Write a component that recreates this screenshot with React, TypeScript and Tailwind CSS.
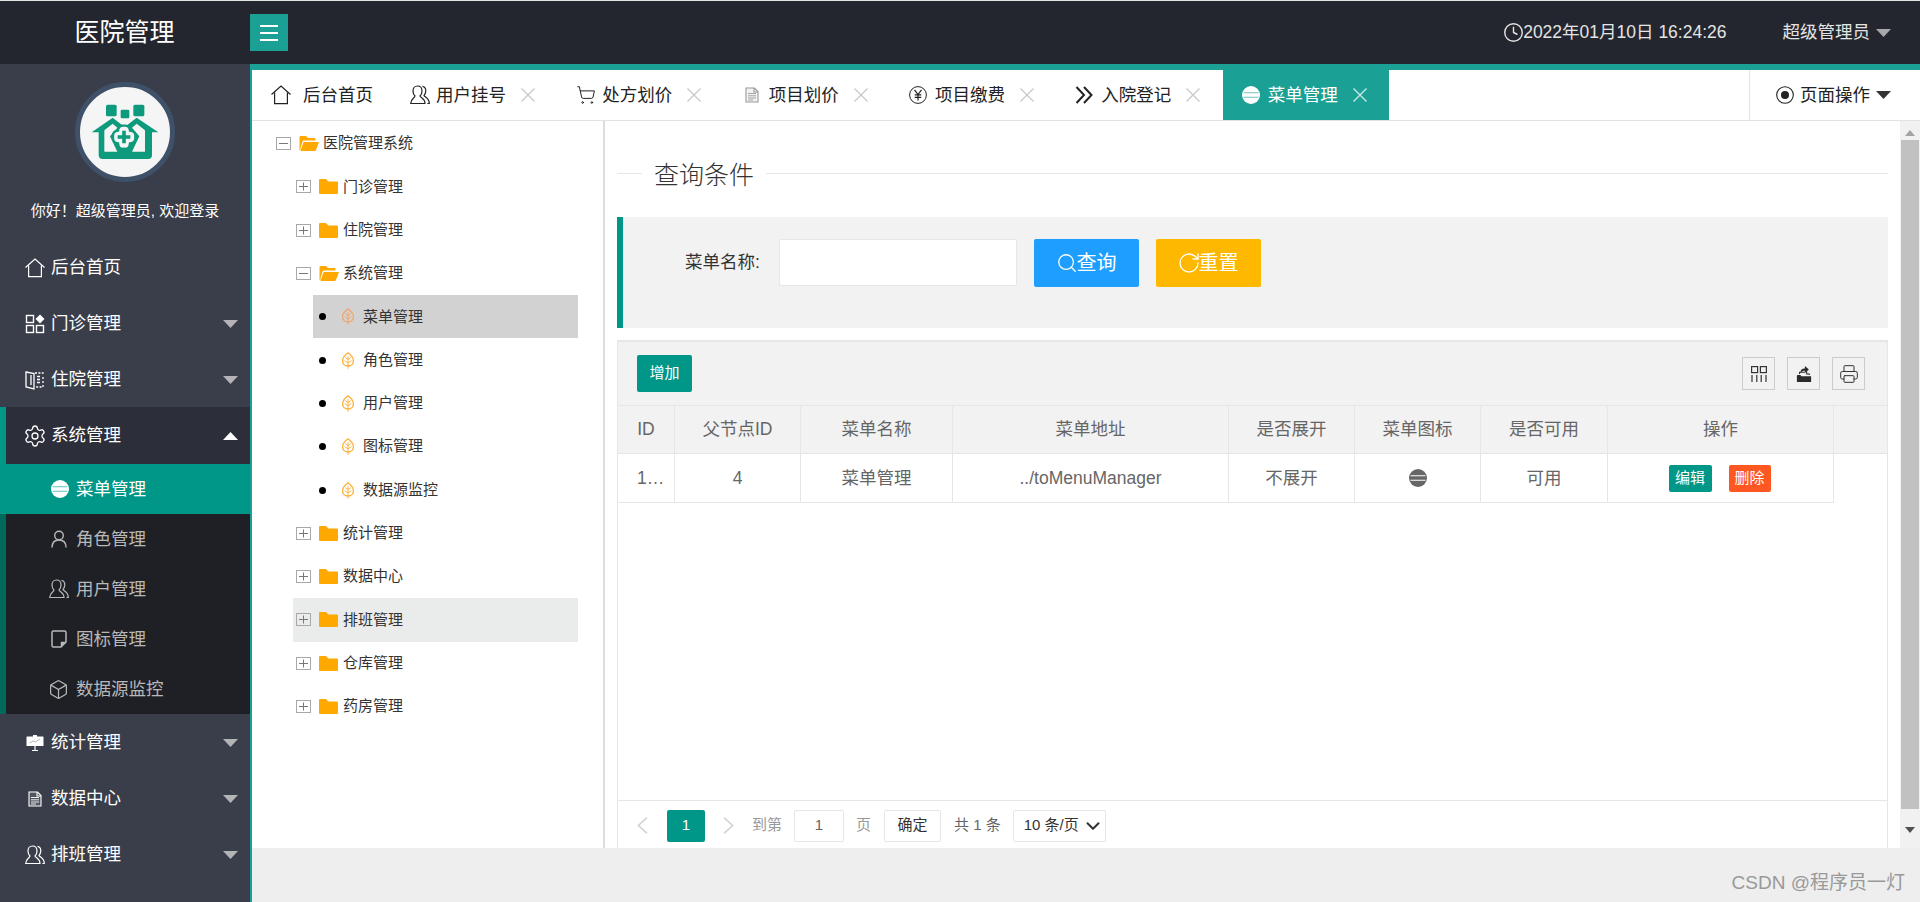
import React from "react";
import { Settings, Box, ShoppingCart, Printer, Search, RotateCw, Clock, ChevronDown } from "lucide-react";

type IP = { className?: string };

const Home = ({ className }: IP) => (
  <svg viewBox="0 0 20 20" className={className} fill="none" stroke="currentColor" strokeWidth="1.2">
    <path d="M0.5 9.5 L10 1 L19.5 9.5" />
    <path d="M3.6 7.5 V18.6 H16.4 V7.5" />
  </svg>
);
const Apps = ({ className }: IP) => (
  <svg viewBox="0 0 20 20" className={className} fill="none" stroke="currentColor" strokeWidth="1.4">
    <rect x="1.5" y="1.5" width="7" height="7" />
    <rect x="1.5" y="11.5" width="7" height="7" />
    <rect x="11.5" y="11.5" width="7" height="7" />
    <path d="M15 0.5 L19.5 5 L15 9.5 L10.5 5 Z" fill="currentColor" stroke="none" />
  </svg>
);
const Ward = ({ className }: IP) => (
  <svg viewBox="0 0 20 20" className={className} fill="none" stroke="currentColor" strokeWidth="1.3">
    <path d="M1 2 L9 3.5 V19 L1 17 Z" />
    <path d="M6 5 V15" />
    <path d="M10 3 H18 V4 M18 7 V9 M18 11 V13 M18 15 V17 H10" strokeDasharray="2 1.4" />
    <path d="M12 6.5 H15 M12 9.5 H15 M12 12.5 H15" />
  </svg>
);
const MenuDot = ({ className, line }: IP & { line: string }) => (
  <svg viewBox="0 0 18 18" className={className}>
    <circle cx="9" cy="9" r="9" fill="currentColor" />
    <path d="M1.5 6.8 H16.5 M1.5 11.2 H16.5" stroke={line} strokeWidth="1.1" />
  </svg>
);
const User = ({ className }: IP) => (
  <svg viewBox="0 0 16 18" className={className} fill="none" stroke="currentColor" strokeWidth="1.4">
    <circle cx="8" cy="5.5" r="4.3" />
    <path d="M1 17.5 C1 12.5 4 10 8 10 C12 10 15 12.5 15 17.5" />
  </svg>
);
const Users = ({ className }: IP) => (
  <svg viewBox="0 0 20 20" className={className} fill="none" stroke="currentColor" strokeWidth="1.2">
    <path d="M7.5 1 C10.5 1 12 3.3 12 6 C12 8.3 11 10 10 11 C10 12.5 15 13.5 15 18.5 H0.7 C0.7 14 5 12.8 5 11 C4 10 3 8.3 3 6 C3 3.3 4.7 1 7.5 1 Z" />
    <path d="M12.5 1.4 C15.4 2 16 4.5 15.7 6.7 C15.5 8.4 14.8 9.6 14 10.6 C15.5 12.5 19.3 13.5 19.3 18.5 H17.4" />
  </svg>
);
const Note = ({ className }: IP) => (
  <svg viewBox="0 0 16 18" className={className} fill="none" stroke="currentColor" strokeWidth="1.5">
    <path d="M10 17 H2.5 Q1 17 1 15.5 V2.5 Q1 1 2.5 1 H13.5 Q15 1 15 2.5 V12 Z" />
    <path d="M10.5 16.5 V12.5 H14.5" fill="currentColor" />
  </svg>
);
const Board = ({ className }: IP) => (
  <svg viewBox="0 0 18 16" className={className}>
    <rect x="0.5" y="1.5" width="17" height="9.5" rx="0.6" fill="currentColor" />
    <rect x="7" y="0" width="4" height="2" fill="currentColor" />
    <path d="M3.5 8 L7 6 L9.5 7 L14 3.8" stroke="#9aa0ab" strokeWidth="0.8" fill="none" />
    <path d="M9 11 V15 M6 15.5 H12" stroke="currentColor" strokeWidth="1.2" />
  </svg>
);
const Doc = ({ className }: IP) => (
  <svg viewBox="0 0 14 16" className={className} fill="none" stroke="currentColor" strokeWidth="1.1">
    <path d="M1 1 H9.5 L13 4.5 V15 H1 Z" fill="currentColor" fillOpacity="0.12" />
    <path d="M9 1 V5 H13" />
    <path d="M3 6.5 H11 M3 8.8 H11 M3 11 H11 M3 13 H8" strokeWidth="0.9" />
  </svg>
);
const Yen = ({ className }: IP) => (
  <svg viewBox="0 0 18 18" className={className} fill="none" stroke="currentColor" strokeWidth="1">
    <circle cx="9" cy="9" r="8.4" />
    <path d="M5.5 3.8 L9 8.6 L12.5 3.8 M9 8.6 V14.5 M5.7 8.8 H12.3 M5.7 11.4 H12.3" strokeWidth="1.2" />
  </svg>
);
const Radio = ({ className }: IP) => (
  <svg viewBox="0 0 18 18" className={className}>
    <circle cx="9" cy="9" r="8.3" fill="none" stroke="currentColor" strokeWidth="1.1" />
    <circle cx="9" cy="9" r="4" fill="currentColor" />
  </svg>
);
const DoubleRight = ({ className }: IP) => (
  <svg viewBox="0 0 18 18" className={className} fill="none" stroke="currentColor" strokeWidth="2">
    <path d="M1.5 1 L9 9 L1.5 17" />
    <path d="M9 1 L16.5 9 L9 17" />
  </svg>
);
const Cross = ({ className }: IP) => (
  <svg viewBox="0 0 14 14" className={className} fill="none" stroke="currentColor" strokeWidth="1.3">
    <path d="M0.5 0.5 L13.5 13.5 M13.5 0.5 L0.5 13.5" />
  </svg>
);
const PageArrow = ({ left }: { left?: boolean }) => (
  <svg viewBox="0 0 11 17" className="block w-[11px] h-[17px] shrink-0" fill="none" stroke="#d2d2d2" strokeWidth="1.6">
    <path d={left ? "M10 0.7 L1.4 8.5 L10 16.3" : "M1 0.7 L9.6 8.5 L1 16.3"} />
  </svg>
);
const FolderClosed = () => (
  <svg viewBox="0 0 19 15" className="w-[19px] h-[15px] shrink-0">
    <path d="M0 1 Q0 0 1 0 H7 L9.5 2.4 H18 Q19 2.4 19 3.4 V14 Q19 15 18 15 H1 Q0 15 0 14 Z" fill="#ffa800" />
  </svg>
);
const FolderOpen = () => (
  <svg viewBox="0 0 20 15" className="w-[20px] h-[15px] shrink-0">
    <path d="M0.5 14 V1 Q0.5 0 1.5 0 H7 L9 2 H15.5 Q16.5 2 16.5 3 V4.6 H5 Q4 4.6 3.6 5.6 L1.6 11.5 L1.6 14 Z" fill="#ffa800" />
    <path d="M5 6 H19.5 Q20 6 19.7 7 L17 14 Q16.7 15 15.7 15 H1.5 L4.2 7 Q4.5 6 5 6 Z" fill="#ffa800" />
  </svg>
);
const Leaf = ({ color }: { color: string }) => (
  <svg viewBox="0 0 12 17" className="block w-[12px] h-[17px] shrink-0" fill="none" stroke={color} strokeWidth="1.3">
    <path d="M6 0.8 C9 3 11.4 5.6 11.4 8.8 C11.4 12 9 14 6 14 C3 14 0.6 12 0.6 8.8 C0.6 5.6 3 3 6 0.8 Z" />
    <path d="M6 4 V16.8 M6 7.6 L8.8 5.6 M6 7.6 L3.2 5.6 M6 11 L9.4 8.6 M6 11 L2.6 8.6" strokeWidth="0.9" />
  </svg>
);
const TreeBox = ({ open }: { open?: boolean }) => (
  <svg viewBox="0 0 15 13" className="w-[15px] h-[13px] shrink-0" fill="none">
    <rect x="0.5" y="0.5" width="14" height="12" stroke="#a8a8a8" />
    <path d="M3 6.5 H12" stroke="#777" />
    {!open && <path d="M7.5 2.5 V10.5" stroke="#777" />}
  </svg>
);
const Cols = ({ className }: IP) => (
  <svg viewBox="0 0 16 16" className={className} fill="none" stroke="#333" strokeWidth="1.2">
    <rect x="0.6" y="0.6" width="6" height="6" />
    <rect x="9.4" y="0.6" width="6" height="6" />
    <path d="M1 9 V16 M5.8 9 V16 M10.2 9 V16 M15 9 V16" />
  </svg>
);
const Export = ({ className }: IP) => (
  <svg viewBox="0 0 18 20" className={className}>
    <path d="M1 12 Q1 11 2 11 H5 L6 12.5 H17 V19 H1 Z" fill="#2b2b2b" />
    <path d="M4 10 V8 H10 M12 7 L12 10 H15 V11" fill="none" stroke="#2b2b2b" strokeWidth="1.2" />
    <path d="M5 9 C5 5 7 3.8 10 3.8 V1 L14.5 5 L10 9 V6.3 C8 6.3 6 7 5 9 Z" fill="#2b2b2b" />
  </svg>
);
const Logo = () => (
  <svg viewBox="240 262 270 270" className="w-[90px] h-[90px]">
    <g fill="#0e9a7c">
      <rect x="318" y="315" width="32" height="35" rx="5" />
      <rect x="362" y="330" width="26" height="26" rx="4" />
      <rect x="400" y="315" width="33" height="35" rx="5" />
      <path d="M275 398 L338 354 L374 382 L410 354 L475 398 L456 398 L456 466 Q456 478 444 478 L308 478 Q296 478 296 466 L296 398 Z" />
    </g>
    <path d="M313 392 L338 372 L352 384 L330 410 L352 456 L313 456 Z M435 392 L410 372 L396 384 L418 410 L396 456 L435 456 Z" fill="#f5f5f5" />
    <path d="M372 378 Q388 376 390 393 Q408 395 406 412 Q408 430 390 431 Q388 450 372 447 Q356 450 354 431 Q337 430 339 412 Q337 395 354 393 Q356 376 372 378 Z" fill="#f5f5f5" stroke="#0e9a7c" strokeWidth="7" />
    <path d="M372 393 V431 M353 412 H391" stroke="#0e9a7c" strokeWidth="11" />
  </svg>
);
const Tri = ({ up, c }: { up?: boolean; c: string }) => (
  <svg viewBox="0 0 15 8" className="w-[15px] h-[8px] shrink-0" fill={c}>
    <path d={up ? "M0 8 L7.5 0 L15 8 Z" : "M0 0 H15 L7.5 8 Z"} />
  </svg>
);

function NavRow({ icon, label, open, active }: { icon: React.ReactNode; label: string; open?: boolean; active?: boolean }) {
  return (
    <div className={`flex items-center text-[17.5px] ${active ? "h-[57px] bg-[#2c2e39] border-l-[6px] border-[#009688] pl-[19px]" : "h-[56px] pt-px pl-[25px]"} pr-[12px] text-white`}>
      <span className="w-[26px] shrink-0 flex">{icon}</span>
      <span className="flex-1">{label}</span>
      {open !== undefined && <Tri up={active} c={active ? "#ffffff" : "#b4b4b8"} />}
    </div>
  );
}
function SubRow({ icon, label, active }: { icon: React.ReactNode; label: string; active?: boolean }) {
  return (
    <div className={`h-[50px] flex items-center text-[17.5px] ${active ? "bg-[#009688] text-white pl-[51px]" : "bg-[#1f2026] text-[#b8b8b8] border-l-[6px] border-[#00695c] pl-[45px]"}`}>
      <span className="w-[25px] shrink-0 flex">{icon}</span>
      <span>{label}</span>
    </div>
  );
}

function Tab({ icon, label, first, active }: { icon: React.ReactNode; label: string; first?: boolean; active?: boolean }) {
  return (
    <div className={`h-[50px] flex items-center shrink-0 text-[17.5px] ${first ? "w-[139px] pl-[19px]" : "w-[166.33px] pl-[19px]"} ${active ? "bg-[#1aa094] text-white" : "text-[#222]"}`}>
      <span className={`${first ? "w-[32px]" : "w-[26px]"} shrink-0 flex`}>{icon}</span>
      <span>{label}</span>
      {!first && <Cross className={`w-[14px] h-[14px] ml-[15px] ${active ? "text-[#cfe9e6]" : "text-[#c8c8c8]"}`} />}
    </div>
  );
}

function TreeRow({ level, open, label, hover }: { level: 0 | 1; open?: boolean; label: string; hover?: boolean }) {
  return (
    <div className={`h-[43.3px] flex items-center text-[15px] text-[#333] ${level === 0 ? "pl-[24px]" : "ml-[41px] mr-[25px] pl-[3px]"} ${hover ? "bg-[#eaebeb]" : ""}`}>
      <TreeBox open={open} />
      <span className="w-[8px] shrink-0" />
      {open ? <FolderOpen /> : <FolderClosed />}
      <span className={open ? "ml-[4px]" : "ml-[5px]"}>{label}</span>
    </div>
  );
}
function TreeLeaf({ label, sel }: { label: string; sel?: boolean }) {
  return (
    <div className={`h-[43.3px] ml-[61px] mr-[25px] flex items-center text-[15px] text-[#333] ${sel ? "bg-[#d2d2d2]" : ""}`}>
      <span className="ml-[6px] w-[7px] h-[7px] rounded-full bg-black shrink-0" />
      <span className="ml-[16px]"><Leaf color={sel ? "#f2a56b" : "#ffb03a"} /></span>
      <span className="ml-[9px]">{label}</span>
    </div>
  );
}

const colsClass = "grid grid-cols-[57px_126px_152px_276px_126px_126px_127px_226px_1fr]";
const headers = ["ID", "父节点ID", "菜单名称", "菜单地址", "是否展开", "菜单图标", "是否可用", "操作", ""];

export default function App() {
  return (
    <div className="w-[1920px] h-[902px] overflow-hidden flex flex-col bg-[#eeeeee] [font-family:'Liberation_Sans','Noto_Sans_CJK_SC',sans-serif]">
      <div className="h-px bg-[#e4e4e4] shrink-0" />
      <header className="h-[63px] shrink-0 bg-[#23262e] flex items-center">
        <div className="w-[250px] text-center text-[25px] text-white pr-[1px]">医院管理</div>
        <button className="w-[38px] h-[37px] bg-[#1aa094] flex flex-col items-center justify-center gap-[5px]">
          <span className="w-[18px] h-[2px] bg-white" />
          <span className="w-[18px] h-[2px] bg-white" />
          <span className="w-[18px] h-[2px] bg-white" />
        </button>
        <div className="flex-1" />
        <div className="flex items-center text-[17.5px] text-[#e4e4e4] pr-[29px]">
          <Clock strokeWidth={1.6} className="w-[21px] h-[21px] -mr-[1px]" />
          <span>2022年01月10日 16:24:26</span>
          <span className="ml-[56px] text-[17.5px]">超级管理员</span>
          <span className="ml-[6px]"><Tri c="#a8a8ac" /></span>
        </div>
      </header>

      <div className="flex-1 flex min-h-0">
        <aside className="w-[252px] shrink-0 bg-[#3a3e4a] border-r-2 border-[#1aa094] flex flex-col">
          <div className="h-[175px] shrink-0 flex flex-col items-center pt-[18px]">
            <div className="w-[100px] h-[100px] rounded-full bg-[#f5f5f5] border-[5px] border-[#3f5168] flex items-center justify-center shrink-0"><Logo /></div>
            <div className="mt-[18px] text-[15px] text-white">你好！超级管理员, 欢迎登录</div>
          </div>
          <NavRow icon={<Home className="w-[20px] h-[20px]" />} label="后台首页" />
          <NavRow open icon={<Apps className="w-[20px] h-[20px]" />} label="门诊管理" />
          <NavRow open icon={<Ward className="w-[20px] h-[20px]" />} label="住院管理" />
          <NavRow open active icon={<Settings strokeWidth={1.3} className="w-[24px] h-[24px] -ml-[2px]" />} label="系统管理" />
          <SubRow active icon={<MenuDot line="#5cc4ba" className="w-[18px] h-[18px]" />} label="菜单管理" />
          <SubRow icon={<User className="w-[16px] h-[18px]" />} label="角色管理" />
          <SubRow icon={<Users className="w-[20px] h-[20px] -ml-[2px]" />} label="用户管理" />
          <SubRow icon={<Note className="w-[16px] h-[18px]" />} label="图标管理" />
          <SubRow icon={<Box strokeWidth={1.4} className="w-[21px] h-[21px] -ml-[3px]" />} label="数据源监控" />
          <NavRow open icon={<Board className="w-[18px] h-[16px] ml-[1px]" />} label="统计管理" />
          <NavRow open icon={<Doc className="w-[14px] h-[16px] ml-[3px]" />} label="数据中心" />
          <NavRow open icon={<Users className="w-[20px] h-[20px]" />} label="排班管理" />
        </aside>

        <main className="flex-1 min-w-0 flex flex-col">
          <div className="h-[6px] bg-[#1aa094] shrink-0" />
          <div className="h-[51px] shrink-0 bg-white border-b border-[#e2e2e2] flex">
            <Tab first icon={<Home className="w-[20px] h-[20px]" />} label="后台首页" />
            <Tab icon={<Users className="w-[20px] h-[20px]" />} label="用户挂号" />
            <Tab icon={<ShoppingCart strokeWidth={1.2} className="w-[20px] h-[20px]" />} label="处方划价" />
            <Tab icon={<Doc className="w-[14px] h-[16px] ml-[2px] text-[#999]" />} label="项目划价" />
            <Tab icon={<Yen className="w-[18px] h-[18px]" />} label="项目缴费" />
            <Tab icon={<DoubleRight className="w-[18px] h-[18px]" />} label="入院登记" />
            <Tab active icon={<MenuDot line="#6cc5bc" className="w-[18px] h-[18px]" />} label="菜单管理" />
            <div className="flex-1" />
            <div className="w-[171px] border-l border-[#e2e2e2] flex items-center pl-[26px] text-[17.5px] text-[#222]">
              <Radio className="w-[18px] h-[18px]" />
              <span className="ml-[6px]">页面操作</span>
              <span className="ml-[6px]"><Tri c="#333" /></span>
            </div>
          </div>

          <div className="h-[727px] shrink-0 bg-white flex">
            <div className="w-[353px] shrink-0 border-r-2 border-[#dcdcdc] pt-px">
              <TreeRow level={0} open label="医院管理系统" />
              <TreeRow level={1} label="门诊管理" />
              <TreeRow level={1} label="住院管理" />
              <TreeRow level={1} open label="系统管理" />
              <TreeLeaf sel label="菜单管理" />
              <TreeLeaf label="角色管理" />
              <TreeLeaf label="用户管理" />
              <TreeLeaf label="图标管理" />
              <TreeLeaf label="数据源监控" />
              <TreeRow level={1} label="统计管理" />
              <TreeRow level={1} label="数据中心" />
              <TreeRow level={1} hover label="排班管理" />
              <TreeRow level={1} label="仓库管理" />
              <TreeRow level={1} label="药房管理" />
            </div>

            <div className="flex-1 min-w-0 flex flex-col pl-[12px] pr-[12px]">
              <div className="h-[96px] shrink-0 pt-[40px]">
                <div className="flex items-center h-[28px]">
                  <span className="w-[25px] h-px bg-[#e6e6e6] -mt-[3px]" />
                  <span className="text-[25px] font-light text-[#333] mx-[12px] pt-[2px]">查询条件</span>
                  <span className="flex-1 h-px bg-[#e6e6e6] -mt-[3px]" />
                </div>
              </div>
              <div className="h-[111px] shrink-0 bg-[#f2f2f2] border-l-[6px] border-[#009688] flex items-start pt-[22px] pl-[62px]">
                <span className="h-[47px] flex items-center text-[17.5px] text-[#333] w-[94px]">菜单名称:</span>
                <input className="w-[238px] h-[47px] bg-white border border-[#e6e6e6] rounded-[2px]" />
                <button className="ml-[17px] w-[105px] h-[48px] rounded-[2px] bg-[#1e9fff] text-white text-[20px] flex items-center justify-center">
                  <Search strokeWidth={1.4} className="w-[22px] h-[22px] -ml-[1px] -mr-[1px]" />查询
                </button>
                <button className="ml-[17px] w-[105px] h-[48px] rounded-[2px] bg-[#ffb800] text-white text-[20px] flex items-center justify-center">
                  <RotateCw strokeWidth={1.3} className="w-[24px] h-[24px] -ml-[2px] -mr-[2px]" />重置
                </button>
              </div>

              <div className="flex-1 mt-[12px] min-h-0 border-x border-t border-[#e6e6e6] flex flex-col">
                <div className="h-[64px] shrink-0 bg-[#f2f2f2] border-t border-[#e6e6e6] flex items-center pl-[19px] pr-[22px]">
                  <button className="w-[55px] h-[37px] bg-[#009688] rounded-[2px] text-white text-[15px]">增加</button>
                  <div className="flex-1" />
                  <div className="flex gap-[12px]">
                    <span className="w-[33px] h-[33px] border border-[#ccc] flex items-center justify-center"><Cols className="w-[16px] h-[16px]" /></span>
                    <span className="w-[33px] h-[33px] border border-[#ccc] flex items-center justify-center"><Export className="w-[16px] h-[18px]" /></span>
                    <span className="w-[33px] h-[33px] border border-[#ccc] flex items-center justify-center"><Printer strokeWidth={1.2} className="w-[20px] h-[20px] text-[#333]" /></span>
                  </div>
                </div>
                <div className={`${colsClass} h-[49px] shrink-0 bg-[#f2f2f2] border-y border-[#e6e6e6] text-[17.5px] text-[#666]`}>
                  {headers.map((h, i) => (
                    <div key={i} className={`flex items-center justify-center ${i < 8 ? "border-r border-[#e6e6e6]" : ""}`}>{h}</div>
                  ))}
                </div>
                <div className={`${colsClass} h-[49px] shrink-0 text-[17.5px] text-[#666]`}>
                  <div className="flex items-center pl-[19px] border-r border-b border-[#e6e6e6] overflow-hidden">1…</div>
                  <div className="flex items-center justify-center border-r border-b border-[#e6e6e6]">4</div>
                  <div className="flex items-center justify-center border-r border-b border-[#e6e6e6]">菜单管理</div>
                  <div className="flex items-center justify-center border-r border-b border-[#e6e6e6]">../toMenuManager</div>
                  <div className="flex items-center justify-center border-r border-b border-[#e6e6e6]">不展开</div>
                  <div className="flex items-center justify-center border-r border-b border-[#e6e6e6]"><MenuDot line="#ffffff" className="w-[18px] h-[18px] text-[#666]" /></div>
                  <div className="flex items-center justify-center border-r border-b border-[#e6e6e6]">可用</div>
                  <div className="flex items-center justify-center gap-[17px] pr-[2px] border-r border-b border-[#e6e6e6]">
                    <span className="w-[43px] h-[27px] rounded-[2px] bg-[#009688] text-white text-[15px] flex items-center justify-center">编辑</span>
                    <span className="w-[42px] h-[27px] rounded-[2px] bg-[#ff5722] text-white text-[15px] flex items-center justify-center">删除</span>
                  </div>
                </div>
                <div className="flex-1" />
                <div className="h-[48px] shrink-0 border-t border-[#e6e6e6] flex items-center pl-[19px] text-[15px] pt-[2px]">
                  <PageArrow left />
                  <span className="ml-[19px] w-[38px] h-[32px] rounded-[2px] bg-[#009688] text-white flex items-center justify-center">1</span>
                  <span className="ml-[18px]"><PageArrow /></span>
                  <span className="ml-[18px] text-[#999]">到第</span>
                  <span className="ml-[12px] w-[50px] h-[32px] border border-[#e6e6e6] rounded-[2px] flex items-center justify-center text-[#666]">1</span>
                  <span className="ml-[12px] text-[#999]">页</span>
                  <span className="ml-[13px] w-[57px] h-[32px] border border-[#e6e6e6] rounded-[2px] flex items-center justify-center text-[#333]">确定</span>
                  <span className="ml-[13px] text-[#666]">共 1 条</span>
                  <span className="ml-[12px] w-[93px] h-[32px] border border-[#e6e6e6] rounded-[2px] flex items-center pl-[10px] text-[#333]">
                    10 条/页
                    <ChevronDown strokeWidth={2.2} className="w-[22px] h-[22px] ml-[3px] shrink-0" />
                  </span>
                </div>
              </div>
            </div>

            <div className="w-[20px] shrink-0 bg-[#f1f1f1] flex flex-col items-center">
              <div className="h-[19px] shrink-0 flex items-center justify-center pt-[5px]"><svg viewBox="0 0 10 6" className="w-[10px] h-[6px]" fill="#a3a3a3"><path d="M0 6 L5 0 L10 6 Z" /></svg></div>
              <div className="w-[18px] h-[669px] bg-[#c1c1c1] shrink-0" />
              <div className="flex-1 flex items-center justify-center pt-[2px]"><svg viewBox="0 0 10 6" className="w-[10px] h-[6px]" fill="#505050"><path d="M0 0 H10 L5 6 Z" /></svg></div>
            </div>
          </div>

          <div className="flex-1 flex items-center justify-end pr-[15px] pt-[16px] text-[19px] text-[#999]">CSDN @程序员一灯</div>
        </main>
      </div>
    </div>
  );
}
